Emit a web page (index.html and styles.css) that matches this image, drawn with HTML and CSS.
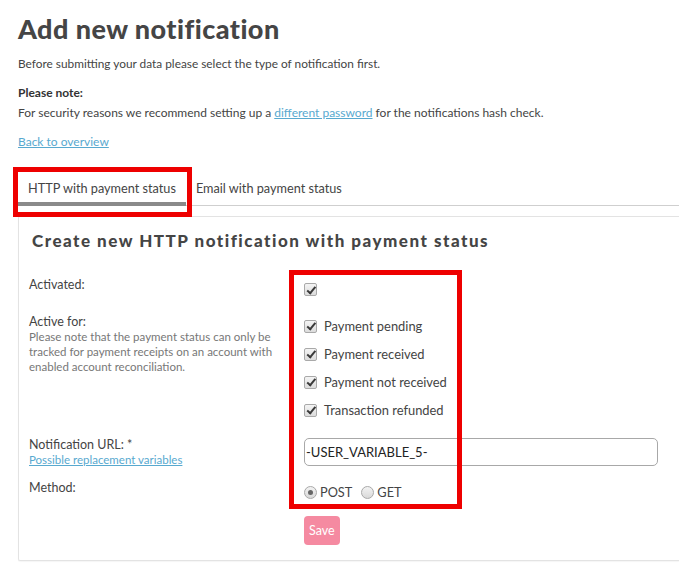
FILE: index.html
```html
<!DOCTYPE html>
<html>
<head>
<meta charset="utf-8">
<link rel="stylesheet" href="styles.css">
</head>
<body>
<div class="page">
  <h1 class="title">Add new notification</h1>
  <p class="intro">Before submitting your data please select the type of notification first.</p>
  <p class="note-head">Please note:</p>
  <p class="note-text">For security reasons we recommend setting up a <a href="#" class="link">different password</a> for the notifications hash check.</p>
  <p class="back"><a href="#" class="link">Back to overview</a></p>

  <div class="tabs">
    <div class="tab tab-active">HTTP with payment status</div>
    <div class="tab">Email with payment status</div>
  </div>

  <div class="panel">
    <h2 class="panel-title">Create new HTTP notification with payment status</h2>

    <div class="row row-activated">
      <div class="label">Activated:</div>
      <div class="field"><span class="cb cb-solo"></span></div>
    </div>

    <div class="row row-active">
      <div class="label">
        <div>Active for:</div>
        <div class="hint">Please note that the payment status can only be tracked for payment receipts on an account with enabled account reconciliation.</div>
      </div>
      <div class="field checklist">
        <div class="check-item"><span class="cb"></span><span>Payment pending</span></div>
        <div class="check-item"><span class="cb"></span><span>Payment received</span></div>
        <div class="check-item"><span class="cb"></span><span>Payment not received</span></div>
        <div class="check-item"><span class="cb"></span><span>Transaction refunded</span></div>
      </div>
    </div>

    <div class="row row-url">
      <div class="label">
        <div>Notification URL: *</div>
        <a href="#" class="link">Possible replacement variables</a>
      </div>
      <div class="field"><div class="text-input">-USER_VARIABLE_5-</div></div>
    </div>

    <div class="row row-method">
      <div class="label">Method:</div>
      <div class="field radios">
        <span class="radio radio-on"></span><span class="radio-label">POST</span>
        <span class="radio"></span><span class="radio-label">GET</span>
      </div>
    </div>

    <div class="row row-save">
      <div></div>
      <div class="field"><span class="btn-save">Save</span></div>
    </div>
  </div>
</div>
<div class="mark mark-tab"></div>
<div class="mark mark-fields"></div>
</body>
</html>
```

FILE: styles.css
```css
html, body {
  margin: 0;
  padding: 0;
  background: #fff;
  overflow: hidden;
}
body {
  font-family: "Lato", "Open Sans", sans-serif;
  font-size: 12px;
  color: #444;
  width: 679px;
  height: 574px;
  position: relative;
}
.page {
  padding-left: 18px;
  padding-top: 12px;
}
.title {
  font-family: "Lato", sans-serif;
  font-weight: 900;
  font-size: 27px;
  line-height: 34px;
  margin: 0 0 10px 0;
  color: #454545;
  letter-spacing: 0.45px;
}
.intro {
  margin: 0 0 13px;
  line-height: 16px;
  font-size: 11.85px;
}
.note-head {
  margin: 0 0 4px;
  line-height: 16px;
  font-weight: 700;
  color: #333;
}
.note-text {
  margin: 0 0 13px;
  line-height: 16px;
}
.back {
  margin: 0;
  line-height: 16px;
}
.link {
  color: #58a9cf;
  text-decoration: underline;
}
.tabs {
  margin-top: 26px;
  display: flex;
  border-bottom: 1px solid #cfcfcf;
  font-size: 12.7px;
}
.tab {
  padding: 4px 10px 5px 10px;
  line-height: 17px;
  border-bottom: 4px solid transparent;
  margin-bottom: -1px;
  color: #444;
}
.tab-active {
  border-bottom-color: #8a8a8a;
}
.panel {
  margin-top: 10px;
  border: 1px solid #e3e3e3;
  border-right: none;
  border-radius: 2px 0 0 2px;
  padding: 14px 0 15px 10px;
  box-shadow: 0 1px 1px rgba(0,0,0,0.04);
}
.panel-title {
  margin: 0 0 0 3px;
  font-family: "Lato", sans-serif;
  font-size: 17px;
  line-height: 20px;
  font-weight: 900;
  letter-spacing: 1.5px;
  color: #454545;
}
.row {
  display: grid;
  grid-template-columns: 275px 1fr;
}
.label {
  line-height: 15px;
  font-size: 12.5px;
}
.row-activated {
  margin-top: 26px;
  height: 35px;
}
.row-activated .field {
  padding-top: 6px;
}
.row-active .label {
  padding-top: 2px;
}
.hint {
  font-size: 11.5px;
  color: #777;
  line-height: 15px;
  margin-top: 0;
  width: 252px;
}
.checklist {
  display: flex;
  flex-direction: column;
}
.check-item {
  height: 28px;
  display: flex;
  align-items: center;
  gap: 7px;
  font-size: 12.9px;
}
.cb {
  width: 11px;
  height: 11px;
  border: 1px solid #a9a9a9;
  border-radius: 2px;
  background: linear-gradient(#f4f4f4, #dcdcdc);
  position: relative;
  display: inline-block;
  box-sizing: content-box;
  flex: none;
}
.cb::after {
  content: "";
  position: absolute;
  left: 3.5px;
  top: 0.5px;
  width: 3px;
  height: 6.5px;
  border: solid #3a3a3a;
  border-width: 0 2px 2px 0;
  transform: rotate(40deg);
}
.cb-solo {
  display: block;
}
.row-url {
  margin-top: 12px;
}
.row-url .label {
  padding-top: 1px;
}
.row-url .link {
  font-size: 11.5px;
  display: block;
  line-height: 16px;
}
.row-url .field {
  padding-top: 2px;
}
.text-input {
  width: 351px;
  height: 26px;
  border: 1px solid #a8a8a8;
  border-radius: 5px;
  line-height: 26px;
  padding-left: 1px;
  font-size: 13px;
  color: #222;
}
.row-method {
  margin-top: 12px;
}
.radios {
  display: flex;
  align-items: center;
  padding-top: 5px;
  font-size: 12.75px;
}
.radio {
  width: 11px;
  height: 11px;
  border: 1px solid #a9a9a9;
  border-radius: 50%;
  background: linear-gradient(#f3f3f3, #d9d9d9);
  position: relative;
  display: inline-block;
  flex: none;
}
.radio-on::after {
  content: "";
  position: absolute;
  left: 3px;
  top: 3px;
  width: 5px;
  height: 5px;
  border-radius: 50%;
  background: #666;
}
.radio-label {
  margin-left: 3px;
  margin-right: 9px;
  line-height: 14px;
}
.row-save {
  margin-top: 17px;
}
.btn-save {
  display: inline-block;
  background: #f58aa1;
  color: #fff;
  font-size: 12.5px;
  line-height: 29px;
  height: 29px;
  padding: 0 5px;
  border-radius: 4px;
}
.mark {
  position: absolute;
  border: 5px solid #ee0000;
  box-sizing: border-box;
}
.mark-tab {
  left: 13px;
  top: 167px;
  width: 179px;
  height: 50px;
}
.mark-fields {
  left: 289px;
  top: 270px;
  width: 173px;
  height: 239px;
}
```
